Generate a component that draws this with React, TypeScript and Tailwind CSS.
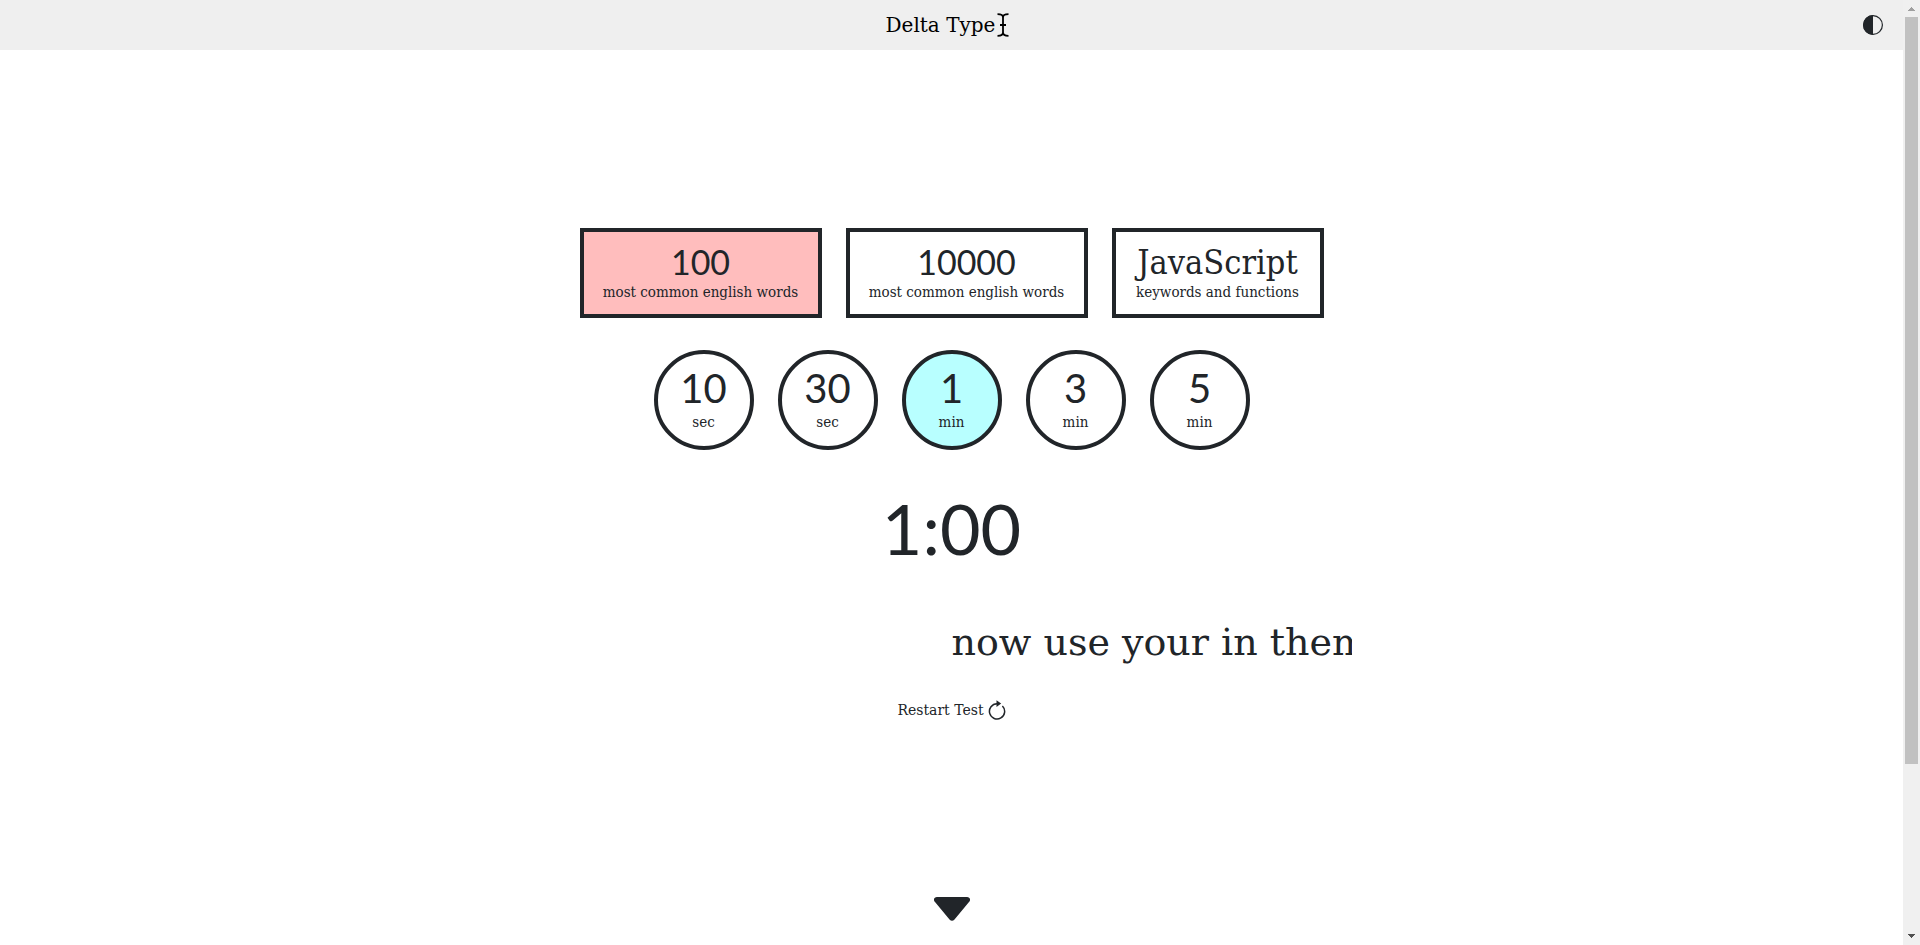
import { useState } from "react";

const wordSets = [
  { title: "100", caption: "most common english words", box: "w-[242px]", face: "font-['Lato',sans-serif] text-[34px]" },
  { title: "10000", caption: "most common english words", box: "w-[242px]", face: "font-['Lato',sans-serif] text-[34px]" },
  { title: "JavaScript", caption: "keywords and functions", box: "w-[212px]", face: "text-[34px]" },
];

const durations = [
  { amount: 10, unit: "sec", clock: "0:10" },
  { amount: 30, unit: "sec", clock: "0:30" },
  { amount: 1, unit: "min", clock: "1:00" },
  { amount: 3, unit: "min", clock: "3:00" },
  { amount: 5, unit: "min", clock: "5:00" },
];

function CursorIcon() {
  return (
    <svg width="12" height="24" viewBox="0 0 12 24" fill="none" stroke="currentColor" strokeWidth="1.8" aria-hidden="true">
      <path d="M0.5 1.2C3.5 1.2 6 2 6 4.5V19.5C6 22 3.5 22.8 0.5 22.8M11.5 1.2C8.5 1.2 6 2 6 4.5M6 19.5C6 22 8.5 22.8 11.5 22.8M3 12H9" />
    </svg>
  );
}

function RestartIcon() {
  return (
    <svg width="18" height="20" viewBox="0 0 18 20" fill="none" stroke="currentColor" strokeWidth="1.5" aria-hidden="true">
      <path d="M14.4 6A7.6 7.6 0 1 1 9 3.8" />
      <path d="M8.5 0.2L13.2 3.6L8.5 7Z" fill="currentColor" stroke="none" />
    </svg>
  );
}

function Scrollbar() {
  return (
    <div className="flex w-[17px] shrink-0 flex-col items-center bg-[#f0f0f0]" aria-hidden="true">
      <svg width="17" height="17" viewBox="0 0 17 17" shapeRendering="crispEdges">
        <path d="M5 11H12L8.5 7Z" fill="#a0a0a0" />
      </svg>
      <div className="flex w-full grow flex-col px-0.5">
        <div className="h-[82%] bg-[#c1c1c1]" />
      </div>
      <svg width="17" height="17" viewBox="0 0 17 17" shapeRendering="crispEdges">
        <path d="M5 6H12L8.5 10Z" fill="#505050" />
      </svg>
    </div>
  );
}

export default function App() {
  const [wordSet, setWordSet] = useState(0);
  const [duration, setDuration] = useState(2);

  return (
    <div className="flex h-screen bg-white font-['DejaVu_Serif',serif] text-[#212529]">
      <div className="flex min-w-0 grow flex-col">
        <header className="grid h-[50px] shrink-0 grid-cols-3 items-center bg-[#efefef] px-5">
          <a href="#top" className="col-start-2 flex items-center justify-center gap-0.5 pr-2 text-xl text-black">
            Delta Type
            <CursorIcon />
          </a>
          <button type="button" aria-label="Toggle theme" className="justify-self-end">
            <svg width="20" height="20" viewBox="0 0 20 20" aria-hidden="true">
              <circle cx="10" cy="10" r="9.4" fill="none" stroke="currentColor" strokeWidth="1.2" />
              <path d="M10 0A10 10 0 0 0 10 20Z" fill="currentColor" />
            </svg>
          </button>
        </header>

        <main className="flex grow flex-col items-center pt-[178px]">
          <div className="flex gap-6 font-['DejaVu_Serif_Condensed','DejaVu_Serif',serif]">
            {wordSets.map((set, i) => (
              <button
                key={set.title}
                type="button"
                aria-pressed={wordSet === i}
                onClick={() => setWordSet(i)}
                className={`flex h-[90px] flex-col items-center border-4 border-[#212529] pt-2 ${set.box} ${wordSet === i ? "bg-[#ffbdbd]" : "bg-white"}`}
              >
                <span className={`leading-[44px] ${set.face}`}>{set.title}</span>
                <span className="text-[15px] leading-4 whitespace-nowrap">{set.caption}</span>
              </button>
            ))}
          </div>

          <div className="mt-8 flex gap-6 font-['DejaVu_Serif_Condensed','DejaVu_Serif',serif]">
            {durations.map((item, i) => (
              <button
                key={item.clock}
                type="button"
                aria-pressed={duration === i}
                onClick={() => setDuration(i)}
                className={`flex size-[100px] flex-col items-center rounded-full border-4 border-[#212529] pt-2 ${duration === i ? "bg-[#b8ffff]" : "bg-white"}`}
              >
                <span className="font-['Lato',sans-serif] text-[40px] leading-[52px]">{item.amount}</span>
                <span className="text-[15px] leading-4">{item.unit}</span>
              </button>
            ))}
          </div>

          <div className="mt-8 font-['Lato',sans-serif] text-[70px] leading-[92px]">{durations[duration].clock}</div>

          <div className="mt-9 flex w-full max-w-[800px] overflow-hidden">
            <p className="ml-[50%] text-[38px] leading-[64px] whitespace-nowrap">now use your in them</p>
          </div>

          <button type="button" className="mt-6 flex items-center gap-1 text-sm leading-6">
            Restart Test
            <RestartIcon />
          </button>

          <a href="#results" aria-label="Scroll to results" className="mt-auto mb-6">
            <svg width="36" height="24" viewBox="0 0 36 24" aria-hidden="true">
              <path d="M3 0H33C36 0 37 3 35 5L20.5 22.5Q18 25 15.5 22.5L1 5C-1 3 0 0 3 0Z" fill="currentColor" />
            </svg>
          </a>
        </main>
      </div>
      <Scrollbar />
    </div>
  );
}
